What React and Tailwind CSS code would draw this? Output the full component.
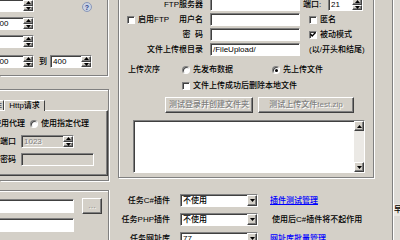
import React from "react";

const sunken =
  "border border-t-[#808080] border-l-[#808080] border-b-white border-r-white shadow-[inset_1px_1px_0_#404040]";
const raised =
  "border border-t-white border-l-white border-b-[#404040] border-r-[#404040] shadow-[inset_-1px_-1px_0_#808080]";
const grayText = "text-[#808080] [text-shadow:1px_1px_0_#fff]";

function Arrow({ up }) {
  return (
    <svg width="5" height="3" viewBox="0 0 5 3" className="block">
      <polygon points={up ? "0,3 5,3 2.5,0" : "0,0 5,0 2.5,3"} fill="#000" />
    </svg>
  );
}

function SpinBox({ value = "", className = "", disabled }) {
  return (
    <div
      className={`${sunken} flex h-[13px] ${disabled ? "bg-[#d4d0c8]" : "bg-white"} ${className}`}
    >
      <div className={`flex-1 pl-[2px] leading-[11px] ${disabled ? grayText : ""}`}>{value}</div>
      <div className="flex flex-col w-[10px]">
        <div className={`${raised} flex-1 bg-[#d4d0c8] flex items-center justify-center`}>
          <Arrow up />
        </div>
        <div className={`${raised} flex-1 bg-[#d4d0c8] flex items-center justify-center`}>
          <Arrow />
        </div>
      </div>
    </div>
  );
}

function Input({ value = "", className = "" }) {
  return (
    <div className={`${sunken} bg-white h-[13px] pl-[2px] leading-[11px] ${className}`}>{value}</div>
  );
}

function Combo({ value }) {
  return (
    <div className={`${sunken} bg-white h-[13px] w-[78px] flex`}>
      <div className="flex-1 pl-[2px] leading-[11px]">{value}</div>
      <div className={`${raised} w-[10px] bg-[#d4d0c8] flex items-center justify-center`}>
        <Arrow />
      </div>
    </div>
  );
}

function Check({ checked }) {
  return (
    <div className={`${sunken} bg-white w-[8px] h-[8px] flex items-center justify-center shrink-0`}>
      {checked && (
        <svg width="6" height="5" viewBox="0 0 6 5">
          <polyline points="0.5,2 2.2,4 5.5,0.5" fill="none" stroke="#000" strokeWidth="1.3" />
        </svg>
      )}
    </div>
  );
}

function Radio({ checked }) {
  return (
    <div className="w-[8px] h-[8px] rounded-full bg-white border border-t-[#808080] border-l-[#808080] border-b-white border-r-white shadow-[inset_1px_1px_0_#404040] flex items-center justify-center shrink-0">
      {checked && <div className="w-[3px] h-[3px] rounded-full bg-black" />}
    </div>
  );
}

function Button({ children, className = "" }) {
  return (
    <div
      className={`${raised} bg-[#d4d0c8] h-[16px] flex items-center justify-center ${grayText} ${className}`}
    >
      {children}
    </div>
  );
}

function HelpIcon() {
  return (
    <div className="ml-[48px] mt-[3px] w-[10px] h-[10px] rounded-full bg-[#c9d2e3] border border-[#8b98b8] flex items-center justify-center text-[7px] leading-[7px] font-bold text-[#2c3f8c]">
      ?
    </div>
  );
}

function LeftColumn() {
  return (
    <div className="w-[118px] shrink-0 flex flex-col">
      <div className="w-[108px] h-[96px] shrink-0 -mt-[20px] pt-[19px] border-r border-b border-[#808080] shadow-[1px_1px_0_#fff] flex flex-col">
        <div className="flex items-start h-[13px]">
          <SpinBox className="w-[42px] -ml-[8px]" />
          <HelpIcon />
        </div>
        <div className="flex mt-[5px]">
          <SpinBox className="w-[42px] -ml-[8px]" value="100" />
        </div>
        <div className="flex mt-[5px]">
          <SpinBox className="w-[42px] -ml-[8px]" />
        </div>
        <div className="flex items-center mt-[7px]">
          <SpinBox className="w-[42px] -ml-[8px]" value="200" />
          <span className="ml-[5px]">到</span>
          <SpinBox className="w-[42px] ml-[3px]" value="400" />
        </div>
      </div>

      <div className="w-[109px] h-[92px] shrink-0 mt-[13px] border-t border-r border-b border-[#808080] shadow-[inset_0_1px_0_#fff,1px_1px_0_#fff] pt-[10px] flex flex-col">
        <div className="flex items-end h-[10px]">
          <div className="-ml-[20px] w-[24px] h-[10px] border-t border-l border-white border-r border-r-[#404040] text-right pr-[1px] leading-[9px]">
            E
          </div>
          <div className="relative z-10 w-[41px] h-[11px] -mb-px bg-[#d4d0c8] border-t border-l border-white border-r border-r-[#404040] text-center leading-[9px]">
            Http请求
          </div>
        </div>
        <div className="w-[108px] h-[66px] border-t border-white border-r border-b border-r-[#404040] border-b-[#404040] shadow-[inset_-1px_-1px_0_#808080] pt-[8px] flex flex-col">
          <div className="flex items-center h-[10px] -ml-[25px]">
            <Radio />
            <span className="ml-[2px]">不使用代理</span>
            <div className="ml-[5px]">
              <Radio />
            </div>
            <span className="ml-[3px]">使用指定代理</span>
          </div>
          <div className="flex items-center mt-[6px]">
            <span className="-ml-[30px] w-[46px] text-right">代理端口</span>
            <SpinBox className="ml-[5px] w-[53px]" value="1023" disabled />
          </div>
          <div className="flex items-center mt-[5px]">
            <span className="-ml-[30px] w-[46px] text-right">代理密码</span>
            <div className={`${sunken} ml-[5px] w-[73px] h-[13px] bg-[#d4d0c8]`} />
          </div>
        </div>
      </div>

      <div className="w-[109px] flex-1 mt-[9px] border-t border-r border-[#808080] shadow-[inset_0_1px_0_#fff,1px_0_0_#fff] pt-[7px] flex flex-col">
        <div className="flex items-center">
          <Input className="w-[84px] -ml-[10px] h-[14px]" />
          <Button className="ml-[8px] w-[20px] h-[15px] leading-[8px]">…</Button>
        </div>
        <Input className="w-[84px] -ml-[10px] h-[14px] mt-[4px]" />
      </div>
    </div>
  );
}

function FtpColumn() {
  return (
    <div className="w-[257px] shrink-0 flex flex-col">
      <div className="w-[256px] h-[198px] shrink-0 -mt-[20px] pt-[18px] border-l border-r border-b border-[#808080] shadow-[inset_1px_0_0_#fff,1px_1px_0_#fff] flex flex-col">
        <div className="flex items-center h-[13px]">
          <div className="w-[86px] flex justify-end pr-[2px]">FTP服务器</div>
          <Input className="ml-[5px] w-[90px]" />
          <span className="ml-[3px] w-[25px]">端口:</span>
          <SpinBox className="w-[35px]" value="21" />
        </div>
        <div className="flex items-center h-[13px] mt-[2px]">
          <div className="w-[86px] flex items-center justify-between pl-[8px] pr-[2px]">
            <div className="flex items-center">
              <Check />
              <span className="ml-[3px]">启用FTP</span>
            </div>
            <span>用户名</span>
          </div>
          <Input className="ml-[5px] w-[90px]" />
          <div className="ml-[9px] flex items-center">
            <Check />
            <span className="ml-[3px]">匿名</span>
          </div>
        </div>
        <div className="flex items-center h-[13px] mt-[2px]">
          <div className="w-[86px] flex justify-end pr-[2px]">密&nbsp;&nbsp;码</div>
          <Input className="ml-[5px] w-[90px]" />
          <div className="ml-[9px] flex items-center">
            <Check checked />
            <span className="ml-[3px]">被动模式</span>
          </div>
        </div>
        <div className="flex items-center h-[13px] mt-[2px]">
          <div className="w-[86px] flex justify-end pr-[2px]">文件上传根目录</div>
          <Input className="ml-[5px] w-[90px]" value="/FileUpload/" />
          <span className="ml-[9px]">(以/开头和结尾)</span>
        </div>

        <div className="flex items-center h-[10px] mt-[9px]">
          <div className="w-[63px] pl-[9px]">上传次序</div>
          <div className="w-[90px] flex items-center">
            <Radio />
            <span className="ml-[3px]">先发布数据</span>
          </div>
          <Radio checked />
          <span className="ml-[3px]">先上传文件</span>
        </div>
        <div className="flex items-center h-[10px] mt-[6px] pl-[63px]">
          <Check />
          <span className="ml-[3px]">文件上传成功后删除本地文件</span>
        </div>
        <div className="flex mt-[6px] pl-[46px]">
          <Button className="w-[88px]">测试登录并创建文件夹</Button>
          <Button className="ml-[5px] w-[96px]">测试上传文件test.zip</Button>
        </div>
        <div className={`${sunken} bg-white ml-[14px] mt-[7px] w-[232px] h-[53px] flex justify-end`}>
          <div className="w-[10px] flex flex-col bg-[#ebe9e5]">
            <div className={`${raised} h-[10px] bg-[#d4d0c8] flex items-center justify-center`}>
              <Arrow up />
            </div>
            <div className="flex-1" />
            <div className={`${raised} h-[10px] bg-[#d4d0c8] flex items-center justify-center`}>
              <Arrow />
            </div>
          </div>
        </div>
      </div>

      <div className="flex items-center mt-[16px]">
        <div className="w-[52px] text-right">任务C#插件</div>
        <div className="ml-[10px]">
          <Combo value="不使用" />
        </div>
        <span className="ml-[12px] text-[#0000ff] underline">插件测试管理</span>
      </div>
      <div className="flex items-center mt-[6px]">
        <div className="w-[52px] text-right">任务PHP插件</div>
        <div className="ml-[10px]">
          <Combo value="不使用" />
        </div>
        <span className="ml-[14px]">使用后C#插件将不起作用</span>
      </div>
      <div className="flex items-center mt-[6px]">
        <div className="w-[52px] text-right">任务网址库</div>
        <div className="ml-[10px]">
          <Combo value="77" />
        </div>
        <span className="ml-[12px] text-[#0000ff] underline">网址库批量管理</span>
      </div>
    </div>
  );
}

function RightStrip() {
  return (
    <div className="flex-1 flex">
      <div className="w-[17px]" />
      <div className="w-[2px] border-l border-[#808080] bg-white" />
      <div className="flex-1 bg-[#dedbd6] flex flex-col">
        <div className="mt-[204px] h-[12px] bg-[#ece9e4] text-[8px] leading-[12px] overflow-hidden">早</div>
      </div>
    </div>
  );
}

export default function App() {
  return (
    <div className="w-[400px] h-[240px] overflow-hidden bg-[#d4d0c8] text-[8px] leading-[10px] font-medium text-black font-['Liberation_Sans','Noto_Sans_CJK_SC',sans-serif] flex">
      <LeftColumn />
      <FtpColumn />
      <RightStrip />
    </div>
  );
}
